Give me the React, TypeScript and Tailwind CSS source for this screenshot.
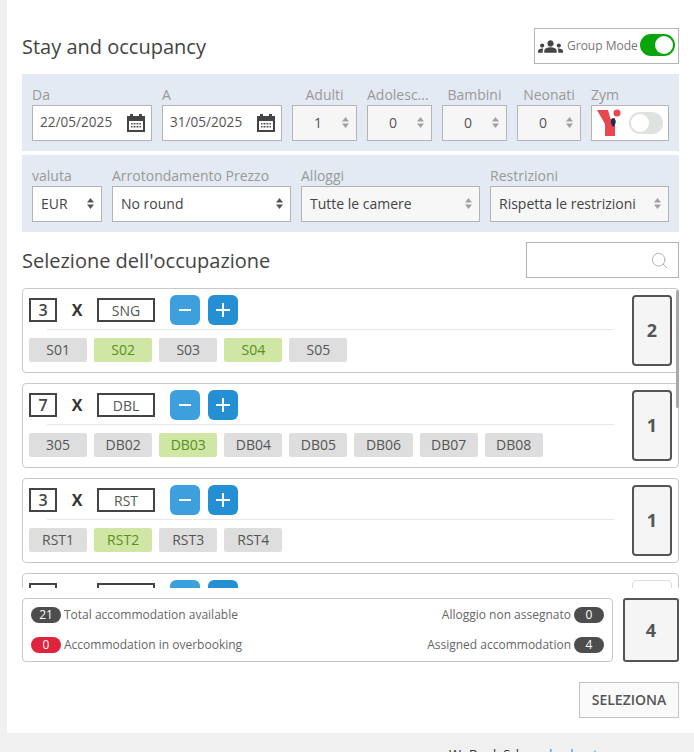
import { Search } from 'lucide-react';
import { MdGroups } from 'react-icons/md';

const font = "font-['Open_Sans',sans-serif]";

function Arrows({ light = false }: { light?: boolean }) {
  const color = light ? 'fill-[#a0a0a0]' : 'fill-[#555]';
  return (
    <svg width="7" height="11" viewBox="0 0 7 11" className={color}>
      <path d="M3.5 0 L7 4.5 H0 Z" />
      <path d="M3.5 11 L7 6.5 H0 Z" />
    </svg>
  );
}

function CalendarIcon() {
  return (
    <svg width="18" height="18" viewBox="0 0 18 18">
      <path d="M3 0 H6 V2 H12 V0 H15 V2 H18 V18 H0 V2 H3 Z" fill="#444" />
      <rect x="2" y="7" width="14" height="9" fill="#fff" />
      <path d="M4 9 H14 V10.5 H4 Z M4 12 H14 V13.5 H4 Z" fill="#555" />
      <path d="M6 8.5 V14 M9 8.5 V14 M12 8.5 V14" stroke="#fff" strokeWidth="1" />
    </svg>
  );
}

function Field({ label, width, children, center }: { label: string; width: string; children: React.ReactNode; center?: boolean }) {
  return (
    <div className={`flex flex-col ${width}`}>
      <div className={`h-[21px] text-[14px] leading-[21px] text-[#999] whitespace-nowrap overflow-hidden ${center ? 'text-center' : ''}`}>{label}</div>
      {children}
    </div>
  );
}

function DateField({ label, value }: { label: string; value: string }) {
  return (
    <Field label={label} width="w-[120px]">
      <div className="flex h-9 items-center justify-between border border-[#b4b4b4] bg-white pb-px pl-[7px] pr-[6px] text-[13.6px] text-[#555]">
        <span>{value}</span>
        <CalendarIcon />
      </div>
    </Field>
  );
}

function NumberField({ label, value, width, center = true }: { label: string; value: string; width: string; center?: boolean }) {
  return (
    <Field label={label} width={width} center={center}>
      <div className="flex h-9 items-center justify-between border border-[#b4b4b4] bg-[#f6f6f6] pb-[2px] pl-[21px] pr-[7px] text-[14px] text-[#555]">
        <span>{value}</span>
        <Arrows light />
      </div>
    </Field>
  );
}

function SelectField({ label, value, width, tinted }: { label: string; value: string; width: string; tinted?: boolean }) {
  return (
    <Field label={label} width={width}>
      <div className={`flex h-9 items-center justify-between border border-[#b4b4b4] pb-[2px] pl-[8px] pr-[7px] text-[14px] text-[#444] ${tinted ? 'bg-[#f7f7f7]' : 'bg-white'}`}>
        <span className="whitespace-nowrap">{value}</span>
        <Arrows light={tinted} />
      </div>
    </Field>
  );
}

function Chip({ label, active }: { label: string; active?: boolean }) {
  return (
    <div className={`flex h-6 w-[58.1px] items-center justify-center rounded-[2px] pb-[2px] text-[14px] ${active ? 'bg-[#cfe6a4] text-[#5b8f1e]' : 'bg-[#dedede] text-[#555]'}`}>
      {label}
    </div>
  );
}

function RoomCard({ count, type, total, rooms, cut }: { count?: number; type?: string; total?: number; rooms: { n: string; on?: boolean }[]; cut?: boolean }) {
  return (
    <div className="flex h-[85px] shrink-0 justify-between rounded-[4px] border border-[#c8c8c8] bg-white pl-[6px] pr-[6px] pt-[6px]">
      <div className="flex w-[585px] flex-col">
        <div className="flex h-[30px] items-center">
          <div className="flex h-6 w-7 items-center justify-center border-2 border-[#444] text-[16px] font-semibold text-[#444]">{count}</div>
          <div className="w-10 text-center text-[16px] font-bold text-[#333]">{cut ? '' : 'X'}</div>
          <div className="flex h-6 w-[58px] items-center justify-center border-2 border-[#444] text-[14px] text-[#555]">{type}</div>
          <button className="ml-[15px] flex h-[30px] w-[30px] items-center justify-center rounded-[6px] bg-[#3d9fdb] text-white">
            <svg width="16" height="16" viewBox="0 0 16 16"><path d="M2 8 H14" stroke="currentColor" strokeWidth="2" /></svg>
          </button>
          <button className="ml-2 flex h-[30px] w-[30px] items-center justify-center rounded-[6px] bg-[#2490d3] text-white">
            <svg width="16" height="16" viewBox="0 0 16 16"><path d="M1 8 H15 M8 1 V15" stroke="currentColor" strokeWidth="2" /></svg>
          </button>
        </div>
        <div className="ml-[18px] mt-[4px] h-px bg-[#e8e8e8]" />
        <div className="mt-[8px] flex gap-[7px]">
          {rooms.map((r) => <Chip key={r.n} label={r.n} active={r.on} />)}
        </div>
      </div>
      <div className={`flex h-[71px] w-10 items-center justify-center rounded-[4px] bg-[#f5f5f5] text-[18px] font-bold text-[#555] ${cut ? 'border border-[#ddd] bg-white' : 'border-2 border-[#555]'}`}>
        {total}
      </div>
    </div>
  );
}

function Pill({ value, color }: { value: number; color: string }) {
  return <span className={`flex h-4 w-[30px] items-center justify-center rounded-full text-[12px] text-white ${color}`}>{value}</span>;
}

export default function App() {
  return (
    <div className={`h-[752px] w-[694px] overflow-hidden bg-[#f0f0f0] pl-[7px] ${font}`}>
      <div className="h-[733px] bg-white pl-[15px] pr-[15px] pt-7">
        <div className="flex h-9 items-center justify-between">
          <h1 className="pt-[2px] text-[20px] leading-[38px] text-[#444]">Stay and occupancy</h1>
          <div className="flex h-9 w-[145px] items-center border border-[#b4b4b4] pl-[3px] text-[12px] text-[#777]">
            <MdGroups className="text-[25px] text-[#444]" />
            <span className="ml-[4px] whitespace-nowrap">Group Mode</span>
            <div className="mb-[3px] ml-[2px] flex h-[22px] w-[35px] items-center justify-end rounded-full bg-[#0aa50a] pr-[2px]">
              <div className="h-[18px] w-[18px] rounded-full bg-white" />
            </div>
          </div>
        </div>

        <div className="mt-[10px] flex h-[77px] gap-[10px] bg-[#e4eaf3] pl-[10px] pt-[10px]">
          <DateField label="Da" value="22/05/2025" />
          <DateField label="A" value="31/05/2025" />
          <NumberField label="Adulti" value="1" width="w-[65px]" />
          <NumberField label="Adolesc..." value="0" width="w-[65px]" center={false} />
          <NumberField label="Bambini" value="0" width="w-[65px]" />
          <NumberField label="Neonati" value="0" width="w-[64px]" />
          <div className="flex w-[78px] flex-col">
            <div className="h-[21px] text-[14px] leading-[21px] text-[#999]">Zym</div>
            <div className="flex h-9 items-center border border-[#b4b4b4] bg-white pl-[5px]">
              <svg width="24" height="28" viewBox="0 0 24 28">
                <path d="M0 1 H11 L13.5 10 L18 9 V27 H8 V15 Z" fill="#e9474f" />
                <circle cx="20" cy="4" r="3.5" fill="#e9474f" />
                <path d="M16 9 C19 10 20 13 16.5 18 C13 15 13 11 16 9 Z" fill="#1d2b4f" />
              </svg>
              <div className="ml-[8px] flex h-[22px] w-[34px] items-center rounded-full bg-[#dfe3df] pl-[2px]">
                <div className="h-[18px] w-[18px] rounded-full bg-white" />
              </div>
            </div>
          </div>
        </div>

        <div className="mt-1 flex h-[77px] gap-[10px] bg-[#e4eaf3] pl-[10px] pt-[10px]">
          <SelectField label="valuta" value="EUR" width="w-[70px]" />
          <SelectField label="Arrotondamento Prezzo" value="No round" width="w-[179px]" />
          <SelectField label="Alloggi" value="Tutte le camere" width="w-[179px]" tinted />
          <SelectField label="Restrizioni" value="Rispetta le restrizioni" width="w-[179px]" tinted />
        </div>

        <div className="mt-[10px] flex h-9 items-center justify-between">
          <h2 className="pt-[2px] text-[20px] text-[#444]">Selezione dell'occupazione</h2>
          <div className="flex h-9 w-[153px] items-center justify-end border border-[#b4b4b4] pr-[9px]">
            <Search size={19} strokeWidth={1.1} className="text-[#aaa]" />
          </div>
        </div>

        <div className="relative mt-[10px] flex h-[300px] flex-col gap-[10px] overflow-hidden">
          <RoomCard count={3} type="SNG" total={2} rooms={[{ n: 'S01' }, { n: 'S02', on: true }, { n: 'S03' }, { n: 'S04', on: true }, { n: 'S05' }]} />
          <RoomCard count={7} type="DBL" total={1} rooms={[{ n: '305' }, { n: 'DB02' }, { n: 'DB03', on: true }, { n: 'DB04' }, { n: 'DB05' }, { n: 'DB06' }, { n: 'DB07' }, { n: 'DB08' }]} />
          <RoomCard count={3} type="RST" total={1} rooms={[{ n: 'RST1' }, { n: 'RST2', on: true }, { n: 'RST3' }, { n: 'RST4' }]} />
          <RoomCard rooms={[]} cut />
          <div className="absolute right-0 top-[2px] h-[118px] w-[3px] rounded-full bg-[#a8a8a8]" />
        </div>

        <div className="mt-[10px] flex h-16 justify-between">
          <div className="flex w-[591px] items-center justify-between rounded-[4px] border border-[#c8c8c8] pl-[8px] pr-[8px] text-[12px] text-[#666]">
            <div className="flex flex-col gap-[12px]">
              <div className="flex items-center gap-[3px]"><Pill value={21} color="bg-[#4d4d4d]" />Total accommodation available</div>
              <div className="flex items-center gap-[3px]"><Pill value={0} color="bg-[#e0233c]" />Accommodation in overbooking</div>
            </div>
            <div className="flex flex-col items-end gap-[12px]">
              <div className="flex items-center gap-[3px]">Alloggio non assegnato<Pill value={0} color="bg-[#4d4d4d]" /></div>
              <div className="flex items-center gap-[3px]">Assigned accommodation<Pill value={4} color="bg-[#4d4d4d]" /></div>
            </div>
          </div>
          <div className="flex w-14 items-center justify-center rounded-[3px] border-2 border-[#555] bg-[#f5f5f5] text-[18px] font-bold text-[#555]">4</div>
        </div>

        <div className="mt-5 flex justify-end">
          <button className="h-9 w-[100px] border border-[#c4c4c4] bg-[#fafafa] pb-[2px] text-[14px] font-semibold text-[#555]">SELEZIONA</button>
        </div>
      </div>
      <div className="mt-[12px] pl-[442px] text-[13px] leading-[18px] text-[#333]">
        WuBook Srl - <span className="ml-[19px] text-[#2490d3]">backout</span>
      </div>
    </div>
  );
}
